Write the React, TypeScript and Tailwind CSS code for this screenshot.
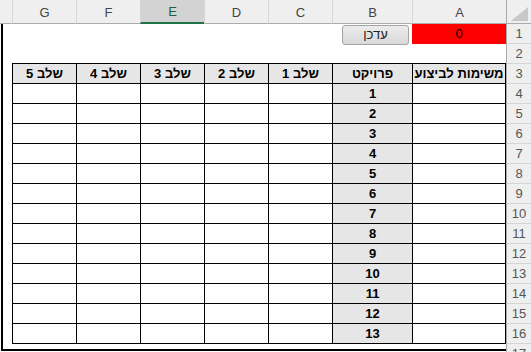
import React from "react";

const FONT = { fontFamily: '"Liberation Sans", "DejaVu Sans", Arial, sans-serif' };

const colHeaders: { label: string; w: string; sel?: boolean }[] = [
  { label: "G", w: "w-[64px]" },
  { label: "F", w: "w-[64px]" },
  { label: "E", w: "w-[64px]", sel: true },
  { label: "D", w: "w-[64px]" },
  { label: "C", w: "w-[64px]" },
  { label: "B", w: "w-[80px]" },
  { label: "A", w: "w-[94px]" },
];

const widths = ["w-[64px]", "w-[64px]", "w-[64px]", "w-[64px]", "w-[64px]", "w-[80px]", "w-[94px]"];
const tableHeads = ["שלב 5", "שלב 4", "שלב 3", "שלב 2", "שלב 1", "פרויקט", "משימות לביצוע"];

function ColumnHeader() {
  return (
    <div className="flex h-[24px] bg-[#efefef] text-[13px] text-[#444]">
      <div className="w-[12px] h-full border-b border-[#ababab]" />
      {colHeaders.map((c) =>
        c.sel ? (
          <div
            key={c.label}
            className={`${c.w} h-full flex items-center justify-center pt-[2px] border-l border-[#d5d5d5] bg-[#d3d3d3] border-b-2 border-b-[#217346] text-[#1d5f3a]`}
          >
            {c.label}
          </div>
        ) : (
          <div
            key={c.label}
            className={`${c.w} h-full flex items-center justify-center pt-[2px] border-l border-[#d5d5d5] border-b border-b-[#ababab]`}
          >
            {c.label}
          </div>
        )
      )}
      <div className="w-[25px] h-full border-l border-[#ababab] border-b border-b-[#ababab] relative">
        <svg width="25" height="23" className="block">
          <polygon points="4,21 21,21 21,7" fill="#c8c8c8" />
        </svg>
      </div>
    </div>
  );
}

function Row1() {
  return (
    <div className="flex h-[20px]">
      <div className="w-[9px]" />
      <div className="w-[64px]" />
      <div className="w-[64px]" />
      <div className="w-[64px]" />
      <div className="w-[64px]" />
      <div className="w-[64px]" />
      <div className="w-[80px] overflow-visible">
        <button className="ml-[10px] mt-px w-[67px] h-[20px] rounded-[3px] border border-[#a3a3a3] bg-gradient-to-b from-[#ececec] to-[#d9d9d9] text-[13px] text-[#222] flex items-center justify-center relative">
          עדכן
        </button>
      </div>
      <div className="w-[94px] h-full bg-[#ff0000] flex items-center justify-center text-[13px] text-black">0</div>
    </div>
  );
}

function Row2() {
  return (
    <div className="flex h-[20px]">
      <div className="w-[9px]" />
      {widths.map((w, i) => (
        <div key={i} className={`${w} h-full border-b border-black`} />
      ))}
    </div>
  );
}

function HeadRow() {
  return (
    <div className="flex h-[20px]">
      <div className="w-[9px]" />
      {tableHeads.map((t, i) => (
        <div
          key={i}
          dir="rtl"
          className={`${widths[i]} h-full border-l border-b border-black bg-[#e7e6e6] flex items-center justify-center font-bold text-[13px] text-black ${i === 6 ? "border-r" : ""}`}
        >
          {t}
        </div>
      ))}
    </div>
  );
}

function DataRow({ n }: { n: number }) {
  return (
    <div className="flex h-[20px]">
      <div className="w-[9px]" />
      {widths.map((w, i) => (
        <div
          key={i}
          className={`${w} h-full border-l border-b border-black flex items-center justify-center font-bold text-[13px] text-black ${
            i === 5 ? "bg-[#e7e6e6]" : "bg-white"
          } ${i === 6 ? "border-r" : ""}`}
        >
          {i === 5 ? n : ""}
        </div>
      ))}
    </div>
  );
}

export default function App() {
  const rowNums = Array.from({ length: 17 }, (_, i) => i + 1);
  return (
    <div className="w-[531px] h-[352px] overflow-hidden bg-white select-none" style={FONT}>
      <ColumnHeader />
      <div className="flex h-[328px]">
        <div className="ml-px w-[505px] h-[327px] border-l-2 border-b-2 border-black overflow-hidden">
          <Row1 />
          <Row2 />
          <HeadRow />
          {Array.from({ length: 13 }, (_, i) => (
            <DataRow key={i} n={i + 1} />
          ))}
        </div>
        <div className="w-[25px] h-full bg-[#efefef] border-l border-[#ababab] overflow-hidden">
          {rowNums.map((n) => (
            <div
              key={n}
              className="h-[20px] border-b border-[#d5d5d5] flex items-center justify-center text-[13px] text-[#555] pt-px"
            >
              {n}
            </div>
          ))}
        </div>
      </div>
    </div>
  );
}
